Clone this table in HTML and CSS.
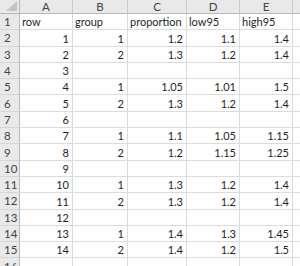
FILE: index.html
```html
<!DOCTYPE html>
<html>
<head>
<meta charset="utf-8">
<link rel="stylesheet" href="styles.css">
</head>
<body>
<div class="sheet">
  <div class="hd corner"><svg class="tri" width="12" height="11" viewBox="0 0 12 11"><polygon points="11,0 11,10 0,10" fill="#c3c3c3"/></svg></div>
  <div class="hd col">A</div><div class="hd col">B</div><div class="hd col">C</div><div class="hd col">D</div><div class="hd col">E</div><div class="hd col last"></div>

  <div class="hd rh">1</div><div class="c t">row</div><div class="c t">group</div><div class="c t">proportion</div><div class="c t">low95</div><div class="c t">high95</div><div class="c"></div>
  <div class="hd rh">2</div><div class="c">1</div><div class="c">1</div><div class="c">1.2</div><div class="c">1.1</div><div class="c">1.4</div><div class="c"></div>
  <div class="hd rh">3</div><div class="c">2</div><div class="c">2</div><div class="c">1.3</div><div class="c">1.2</div><div class="c">1.4</div><div class="c"></div>
  <div class="hd rh">4</div><div class="c">3</div><div class="c"></div><div class="c"></div><div class="c"></div><div class="c"></div><div class="c"></div>
  <div class="hd rh">5</div><div class="c">4</div><div class="c">1</div><div class="c">1.05</div><div class="c">1.01</div><div class="c">1.5</div><div class="c"></div>
  <div class="hd rh">6</div><div class="c">5</div><div class="c">2</div><div class="c">1.3</div><div class="c">1.2</div><div class="c">1.4</div><div class="c"></div>
  <div class="hd rh">7</div><div class="c">6</div><div class="c"></div><div class="c"></div><div class="c"></div><div class="c"></div><div class="c"></div>
  <div class="hd rh">8</div><div class="c">7</div><div class="c">1</div><div class="c">1.1</div><div class="c">1.05</div><div class="c">1.15</div><div class="c"></div>
  <div class="hd rh">9</div><div class="c">8</div><div class="c">2</div><div class="c">1.2</div><div class="c">1.15</div><div class="c">1.25</div><div class="c"></div>
  <div class="hd rh">10</div><div class="c">9</div><div class="c"></div><div class="c"></div><div class="c"></div><div class="c"></div><div class="c"></div>
  <div class="hd rh">11</div><div class="c">10</div><div class="c">1</div><div class="c">1.3</div><div class="c">1.2</div><div class="c">1.4</div><div class="c"></div>
  <div class="hd rh">12</div><div class="c">11</div><div class="c">2</div><div class="c">1.3</div><div class="c">1.2</div><div class="c">1.4</div><div class="c"></div>
  <div class="hd rh">13</div><div class="c">12</div><div class="c"></div><div class="c"></div><div class="c"></div><div class="c"></div><div class="c"></div>
  <div class="hd rh">14</div><div class="c">13</div><div class="c">1</div><div class="c">1.4</div><div class="c">1.3</div><div class="c">1.45</div><div class="c"></div>
  <div class="hd rh">15</div><div class="c">14</div><div class="c">2</div><div class="c">1.4</div><div class="c">1.2</div><div class="c">1.5</div><div class="c"></div>
  <div class="hd rh">16</div><div class="c"></div><div class="c"></div><div class="c"></div><div class="c"></div><div class="c"></div><div class="c"></div>
</div>
</body>
</html>
```

FILE: styles.css
```css
html, body {
  margin: 0;
  padding: 0;
  background: #ffffff;
  overflow: hidden;
}
.sheet {
  display: grid;
  grid-template-columns: 20px 53px 55px 59px 53px 53px 20px;
  grid-template-rows: 14px repeat(16, 16.3px);
  font-family: Lato, "Liberation Sans", sans-serif;
  font-size: 11px;
  color: #1f1f1f;
  width: 313px;
}
.hd {
  background: #e9e9e9;
  color: #444444;
  box-sizing: border-box;
  border-right: 1px solid #c9c9c9;
  border-bottom: 1px solid #c9c9c9;
  display: flex;
  align-items: center;
}
.col {
  justify-content: center;
  font-size: 11.5px;
  border-bottom-color: #b8b8b8;
}
.corner {
  position: relative;
  border-right-color: #b8b8b8;
  border-bottom-color: #b8b8b8;
}
.tri {
  position: absolute;
  right: 1px;
  bottom: 1px;
}
.rh {
  justify-content: flex-start;
  padding-left: 4px;
  font-size: 11.5px;
  border-right-color: #b8b8b8;
  border-bottom-color: #d6d6d6;
}
.c {
  box-sizing: border-box;
  border-right: 1px solid #dcdcdc;
  border-bottom: 1px solid #dcdcdc;
  display: flex;
  align-items: flex-end;
  justify-content: flex-end;
  padding: 0 3px 1px 2px;
  line-height: 13px;
  white-space: nowrap;
  overflow: hidden;
}
.t {
  justify-content: flex-start;
}
```
